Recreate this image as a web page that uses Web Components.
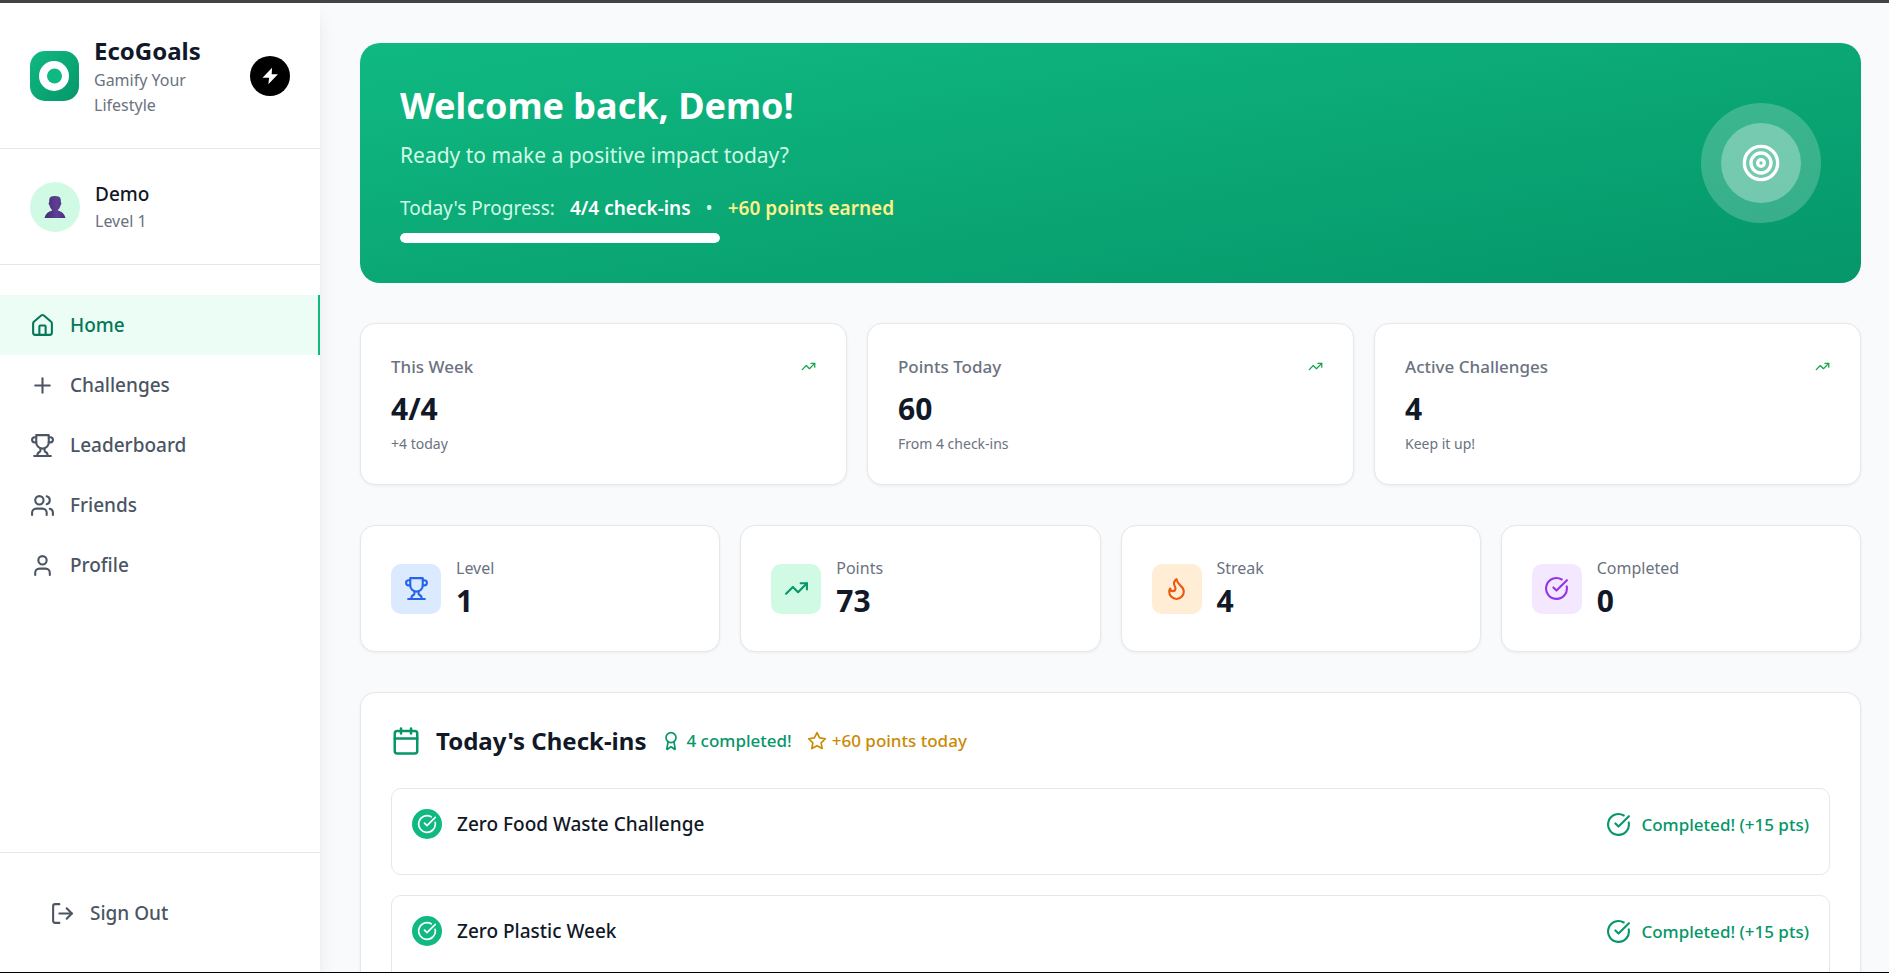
<!DOCTYPE html>
<html lang="en">
<head>
  <meta charset="UTF-8">
  <meta name="viewport" content="width=device-width, initial-scale=1.0">
  <title>EcoGoals</title>
  <style>
    * {
      box-sizing: border-box;
    }
    body {
      margin: 0;
      height: 100vh;
      overflow: hidden;
      border-top: 3px solid #434343;
      background: #f9fafc;
      color: #111827;
      font-family: "Noto Sans", "Open Sans", sans-serif;
    }
    body::after {
      content: "";
      position: fixed;
      inset: auto 0 0;
      z-index: 2;
      height: 1px;
      background: #000;
    }
  </style>
</head>
<body>
  <eco-app>
    <eco-sidebar slot="sidebar">
      <nav-item icon="home" active>Home</nav-item>
      <nav-item icon="plus">Challenges</nav-item>
      <nav-item icon="trophy">Leaderboard</nav-item>
      <nav-item icon="users">Friends</nav-item>
      <nav-item icon="user">Profile</nav-item>
    </eco-sidebar>

    <welcome-banner name="Demo" done="4" total="4" points="60"></welcome-banner>

    <card-grid columns="3">
      <summary-card label="This Week" value="4/4">+4 today</summary-card>
      <summary-card label="Points Today" value="60">From 4 check-ins</summary-card>
      <summary-card label="Active Challenges" value="4">Keep it up!</summary-card>
    </card-grid>

    <card-grid columns="4">
      <stat-card icon="trophy" tone="blue" value="1">Level</stat-card>
      <stat-card icon="trending" tone="green" value="73">Points</stat-card>
      <stat-card icon="flame" tone="orange" value="4">Streak</stat-card>
      <stat-card icon="check" tone="purple" value="0">Completed</stat-card>
    </card-grid>

    <checkin-panel completed="4" points="60">
      <checkin-item points="15">Zero Food Waste Challenge</checkin-item>
      <checkin-item points="15">Zero Plastic Week</checkin-item>
    </checkin-panel>
  </eco-app>

  <script>
    const ICONS = {
      home: '<path d="M15 21v-8a1 1 0 0 0-1-1h-4a1 1 0 0 0-1 1v8"/><path d="M3 10a2 2 0 0 1 .709-1.528l7-5.999a2 2 0 0 1 2.582 0l7 5.999A2 2 0 0 1 21 10v9a2 2 0 0 1-2 2H5a2 2 0 0 1-2-2z"/>',
      plus: '<path d="M5 12h14"/><path d="M12 5v14"/>',
      trophy: '<path d="M6 9H4.5a2.5 2.5 0 0 1 0-5H6"/><path d="M18 9h1.5a2.5 2.5 0 0 0 0-5H18"/><path d="M4 22h16"/><path d="M10 14.66V17c0 .55-.47.98-.97 1.21C7.85 18.75 7 20.24 7 22"/><path d="M14 14.66V17c0 .55.47.98.97 1.21C16.15 18.75 17 20.24 17 22"/><path d="M18 2H6v7a6 6 0 0 0 12 0V2Z"/>',
      users: '<path d="M16 21v-2a4 4 0 0 0-4-4H6a4 4 0 0 0-4 4v2"/><circle cx="9" cy="7" r="4"/><path d="M22 21v-2a4 4 0 0 0-3-3.87"/><path d="M16 3.13a4 4 0 0 1 0 7.75"/>',
      user: '<path d="M19 21v-2a4 4 0 0 0-4-4H9a4 4 0 0 0-4 4v2"/><circle cx="12" cy="7" r="4"/>',
      logout: '<path d="M9 21H5a2 2 0 0 1-2-2V5a2 2 0 0 1 2-2h4"/><path d="m16 17 5-5-5-5"/><path d="M21 12H9"/>',
      target: '<circle cx="12" cy="12" r="10"/><circle cx="12" cy="12" r="6"/><circle cx="12" cy="12" r="2"/>',
      trending: '<path d="M22 7 13.5 15.5 8.5 10.5 2 17"/><path d="M16 7h6v6"/>',
      flame: '<path d="M8.5 14.5A2.5 2.5 0 0 0 11 12c0-1.38-.5-2-1-3-1.072-2.143-.224-4.054 2-6 .5 2.5 2 4.9 4 6.5 2 1.6 3 3.5 3 5.5a7 7 0 1 1-14 0c0-1.153.433-2.294 1-3a2.5 2.5 0 0 0 2.5 2.5z"/>',
      check: '<path d="M21.801 10A10 10 0 1 1 17 3.335"/><path d="m9 11 3 3L22 4"/>',
      calendar: '<path d="M8 2v4"/><path d="M16 2v4"/><rect width="18" height="18" x="3" y="4" rx="2"/><path d="M3 10h18"/>',
      award: '<circle cx="12" cy="8" r="6"/><path d="m15.477 12.89 1.515 8.526a.5.5 0 0 1-.81.47l-3.58-2.687a1 1 0 0 0-1.197 0l-3.586 2.686a.5.5 0 0 1-.81-.469l1.514-8.526"/>',
      star: '<path d="m12 2 3.09 6.26L22 9.27l-5 4.87 1.18 6.88L12 17.77l-6.18 3.25L7 14.14 2 9.27l6.91-1.01z"/>'
    };

    // Shared base: renders the template and keeps box sizing consistent
    class EcoElement extends HTMLElement {
      connectedCallback() {
        if (this.shadowRoot) return;
        this.attachShadow({ mode: 'open' });
        this.shadowRoot.innerHTML = `
          <style>
            *, :host { box-sizing: border-box; }
            h1, h2, p { margin: 0; }
            a { color: inherit; text-decoration: none; }
            button { font: inherit; border: none; cursor: pointer; }
          </style>
          ${this.render()}
        `;
      }

      attr(name) {
        return this.getAttribute(name) || '';
      }
    }

    class EcoIcon extends EcoElement {
      render() {
        return `
          <style>
            :host {
              display: block;
              flex: none;
              width: var(--icon-size, 25px);
              height: var(--icon-size, 25px);
            }
            svg {
              display: block;
              width: 100%;
              height: 100%;
            }
          </style>
          <svg viewBox="0 0 24 24" fill="none" stroke="currentColor" stroke-width="2" stroke-linecap="round" stroke-linejoin="round" aria-hidden="true">${ICONS[this.attr('name')]}</svg>
        `;
      }
    }

    class EcoApp extends EcoElement {
      render() {
        return `
          <style>
            :host {
              display: grid;
              grid-template-columns: 320px 1fr;
              height: 100%;
            }
            main {
              display: flex;
              flex-direction: column;
              gap: 40px;
              min-width: 0;
              padding: 40px 28px 0 40px;
              overflow: hidden;
            }
          </style>
          <slot name="sidebar"></slot>
          <main><slot></slot></main>
        `;
      }
    }

    class EcoSidebar extends EcoElement {
      render() {
        return `
          <style>
            :host {
              display: flex;
              flex-direction: column;
              z-index: 1;
              min-height: 0;
              background: #fff;
              box-shadow: 0 12px 19px -4px rgba(0,0,0,0.1), 0 5px 8px -5px rgba(0,0,0,0.1);
            }
            header, .profile {
              display: flex;
              align-items: center;
              gap: 15px;
              padding: 30px;
              border-bottom: 1px solid #e5e7eb;
            }
            .logo {
              flex: none;
              width: 49px;
              height: 50px;
            }
            .brand {
              flex: 1;
            }
            .title {
              font-size: 24px;
              font-weight: 700;
              line-height: 35px;
            }
            .sub {
              font-size: 16px;
              line-height: 25px;
              color: #6b7280;
            }
            .boost {
              display: grid;
              place-items: center;
              flex: none;
              width: 40px;
              height: 40px;
              padding: 0;
              border-radius: 50%;
              background: #000;
            }
            .avatar {
              display: grid;
              place-items: center;
              width: 50px;
              height: 50px;
              border-radius: 50%;
              background: #d1fae5;
            }
            .name {
              font-size: 19px;
              font-weight: 500;
              line-height: 30px;
            }
            nav {
              flex: 1;
              padding: 30px 0;
            }
            footer {
              padding: 30px;
              border-top: 1px solid #e5e7eb;
            }
            .signout {
              display: flex;
              align-items: center;
              gap: 15px;
              width: 100%;
              height: 60px;
              padding: 0 20px;
              background: none;
              color: #4b5563;
              font-size: 19px;
              font-weight: 500;
            }
          </style>
          <header>
            <svg class="logo" viewBox="0 0 49 50" aria-hidden="true">
              <defs>
                <linearGradient id="leaf" x1="0" y1="0" x2="1" y2="1">
                  <stop offset="0" stop-color="#10b981"/>
                  <stop offset="1" stop-color="#059669"/>
                </linearGradient>
              </defs>
              <rect width="49" height="50" rx="15" fill="url(#leaf)"/>
              <circle cx="24" cy="25" r="15" fill="#fff"/>
              <circle cx="24.5" cy="25" r="7.5" fill="#10b981"/>
            </svg>
            <div class="brand">
              <p class="title">EcoGoals</p>
              <p class="sub">Gamify Your Lifestyle</p>
            </div>
            <button class="boost" type="button" aria-label="Boost">
              <svg width="20" height="20" viewBox="0 0 24 24" fill="#fff" aria-hidden="true"><path d="M14.5 2 3 14h8l-1 8L21.500 10h-7.500z"/></svg>
            </button>
          </header>
          <section class="profile">
            <div class="avatar">
              <svg width="22" height="22" viewBox="0 0 22 22" aria-hidden="true">
                <defs>
                  <linearGradient id="bust" x1="0" y1="0" x2="1" y2="0">
                    <stop offset="0" stop-color="#432c70"/>
                    <stop offset="0.6" stop-color="#5f3f96"/>
                    <stop offset="1" stop-color="#4a2b78"/>
                  </linearGradient>
                </defs>
                <path fill="url(#bust)" d="M5.300 3.500C5.500.900 7.600 0 11 0s5.500.900 5.700 3.500L16.900 6.500c.7.200.7 2-.3 2.500-.4 2.200-1.300 3.800-2.700 4.900v.6c3.800.9 6.700 3.500 7.600 7.500H.5c.9-4 3.800-6.600 7.600-7.500v-.6C6.700 12.800 5.800 11.200 5.400 9c-1-.5-1-2.300-.3-2.500z"/>
              </svg>
            </div>
            <div>
              <p class="name">Demo</p>
              <p class="sub">Level 1</p>
            </div>
          </section>
          <nav><slot></slot></nav>
          <footer>
            <button class="signout" type="button"><eco-icon name="logout"></eco-icon>Sign Out</button>
          </footer>
        `;
      }
    }

    class NavItem extends EcoElement {
      render() {
        return `
          <style>
            :host {
              display: block;
              color: #4b5563;
            }
            a {
              display: flex;
              align-items: center;
              gap: 15px;
              height: 60px;
              padding: 0 30px;
              font-size: 19px;
              font-weight: 500;
            }
            :host([active]) a {
              background: #ecfdf5;
              border-right: 2px solid #10b981;
              color: #047857;
            }
          </style>
          <a href="#"><eco-icon name="${this.attr('icon')}"></eco-icon><slot></slot></a>
        `;
      }
    }

    class WelcomeBanner extends EcoElement {
      render() {
        const percent = Math.round(this.attr('done') / this.attr('total') * 100);
        return `
          <style>
            :host {
              display: flex;
              align-items: center;
              justify-content: space-between;
              flex: none;
              padding: 40px;
              border-radius: 20px;
              background: linear-gradient(to bottom right, #10b981, #059669);
              color: #fff;
            }
            h1 {
              font-size: 36px;
              font-weight: 700;
              line-height: 45px;
            }
            .lead {
              margin: 10px 0 20px;
              font-size: 21px;
              line-height: 35px;
              color: #d1fae5;
            }
            .progress {
              display: flex;
              gap: 15px;
              font-size: 19px;
              line-height: 30px;
              color: #d1fae5;
            }
            strong {
              color: #fff;
              font-weight: 600;
            }
            .points {
              color: #fef08a;
            }
            .track {
              width: 320px;
              height: 10px;
              margin-top: 10px;
              border-radius: 5px;
              background: rgba(255,255,255,0.2);
              overflow: hidden;
            }
            .bar {
              width: ${percent}%;
              height: 100%;
              border-radius: 5px;
              background: #fff;
            }
            .outer, .inner {
              display: grid;
              place-items: center;
              border-radius: 50%;
            }
            .outer {
              width: 120px;
              height: 120px;
              background: rgba(255,255,255,0.2);
            }
            .inner {
              width: 80px;
              height: 80px;
              background: rgba(255,255,255,0.3);
              --icon-size: 40px;
            }
          </style>
          <div>
            <h1>Welcome back, ${this.attr('name')}!</h1>
            <p class="lead">Ready to make a positive impact today?</p>
            <div class="progress">
              <span>Today's Progress:</span>
              <strong>${this.attr('done')}/${this.attr('total')} check-ins</strong>
              <span>•</span>
              <strong class="points">+${this.attr('points')} points earned</strong>
            </div>
            <div class="track" role="progressbar" aria-valuenow="${percent}"><div class="bar"></div></div>
          </div>
          <div class="outer"><div class="inner"><eco-icon name="target"></eco-icon></div></div>
        `;
      }
    }

    class CardGrid extends EcoElement {
      render() {
        return `
          <style>
            :host {
              display: grid;
              flex: none;
              grid-template-columns: repeat(${this.attr('columns')}, 1fr);
              gap: 20px;
            }
          </style>
          <slot></slot>
        `;
      }
    }

    const cardStyle = `
      :host {
        padding: 30px;
        border: 1px solid #e5e7eb;
        border-radius: 15px;
        background: #fff;
        box-shadow: 0 1px 3px rgba(0,0,0,0.06);
      }
    `;

    class SummaryCard extends EcoElement {
      render() {
        return `
          <style>
            ${cardStyle}
            :host {
              display: block;
              color: #6b7280;
            }
            .top {
              display: flex;
              align-items: center;
              justify-content: space-between;
              margin-bottom: 10px;
              font-size: 17px;
              font-weight: 500;
              line-height: 25px;
            }
            eco-icon {
              --icon-size: 15px;
              color: #16a34a;
            }
            .value {
              margin-bottom: 5px;
              color: #111827;
              font-size: 30px;
              font-weight: 700;
              line-height: 40px;
            }
            .note {
              font-size: 14px;
              line-height: 20px;
            }
          </style>
          <div class="top"><span>${this.attr('label')}</span><eco-icon name="trending"></eco-icon></div>
          <p class="value">${this.attr('value')}</p>
          <p class="note"><slot></slot></p>
        `;
      }
    }

    class StatCard extends EcoElement {
      render() {
        const [color, background] = {
          blue: ['#2563eb', '#dbeafe'],
          green: ['#059669', '#d1fae5'],
          orange: ['#ea580c', '#ffedd5'],
          purple: ['#9333ea', '#f3e8ff']
        }[this.attr('tone')];
        return `
          <style>
            ${cardStyle}
            :host {
              display: flex;
              align-items: center;
              gap: 15px;
            }
            .tile {
              display: grid;
              place-items: center;
              width: 50px;
              height: 50px;
              border-radius: 10px;
              background: ${background};
              color: ${color};
            }
            .label {
              color: #6b7280;
              font-size: 16px;
              line-height: 25px;
            }
            .value {
              font-size: 30px;
              font-weight: 700;
              line-height: 40px;
            }
          </style>
          <div class="tile"><eco-icon name="${this.attr('icon')}"></eco-icon></div>
          <div>
            <p class="label"><slot></slot></p>
            <p class="value">${this.attr('value')}</p>
          </div>
        `;
      }
    }

    class CheckinPanel extends EcoElement {
      render() {
        return `
          <style>
            ${cardStyle}
            :host {
              display: block;
              flex: none;
            }
            header {
              display: flex;
              align-items: center;
              gap: 15px;
              margin-bottom: 30px;
              --icon-size: 30px;
            }
            header > eco-icon {
              color: #059669;
            }
            h2 {
              font-size: 24px;
              font-weight: 700;
              line-height: 35px;
            }
            .badge {
              display: flex;
              align-items: center;
              gap: 5px;
              color: #059669;
              font-size: 17px;
              font-weight: 500;
              line-height: 25px;
              --icon-size: 20px;
            }
            .points {
              color: #ca8a04;
            }
            .list {
              display: grid;
              gap: 20px;
            }
          </style>
          <header>
            <eco-icon name="calendar"></eco-icon>
            <h2>Today's Check-ins</h2>
            <span class="badge"><eco-icon name="award"></eco-icon>${this.attr('completed')} completed!</span>
            <span class="badge points"><eco-icon name="star"></eco-icon>+${this.attr('points')} points today</span>
          </header>
          <div class="list"><slot></slot></div>
        `;
      }
    }

    class CheckinItem extends EcoElement {
      render() {
        return `
          <style>
            :host {
              display: flex;
              align-items: center;
              gap: 15px;
              padding: 20px 20px 35px;
              border: 1px solid #e5e7eb;
              border-radius: 10px;
            }
            .mark {
              display: grid;
              place-items: center;
              width: 30px;
              height: 30px;
              border-radius: 50%;
              background: #10b981;
              color: #fff;
              --icon-size: 20px;
            }
            .title {
              flex: 1;
              font-size: 19px;
              font-weight: 500;
              line-height: 30px;
            }
            .status {
              display: flex;
              align-items: center;
              gap: 10px;
              color: #059669;
              font-size: 17px;
              font-weight: 500;
              line-height: 25px;
            }
          </style>
          <span class="mark"><eco-icon name="check"></eco-icon></span>
          <p class="title"><slot></slot></p>
          <span class="status"><eco-icon name="check"></eco-icon>Completed! (+${this.attr('points')} pts)</span>
        `;
      }
    }

    customElements.define('eco-icon', EcoIcon);
    customElements.define('eco-app', EcoApp);
    customElements.define('eco-sidebar', EcoSidebar);
    customElements.define('nav-item', NavItem);
    customElements.define('welcome-banner', WelcomeBanner);
    customElements.define('card-grid', CardGrid);
    customElements.define('summary-card', SummaryCard);
    customElements.define('stat-card', StatCard);
    customElements.define('checkin-panel', CheckinPanel);
    customElements.define('checkin-item', CheckinItem);
  </script>
</body>
</html>
